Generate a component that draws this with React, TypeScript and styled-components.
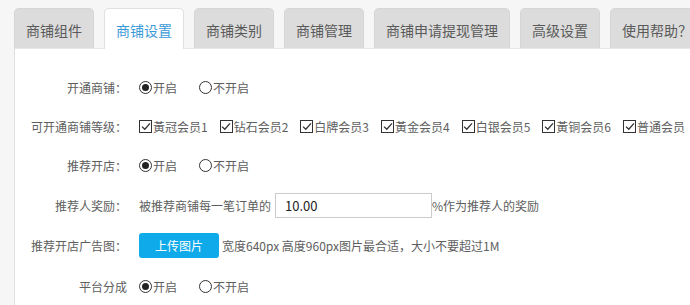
import React from "react";
import styled, { createGlobalStyle } from "styled-components";

const Global = createGlobalStyle`
  html, body { margin: 0; padding: 0; background: #f6f6f6; }
  body { font-family: "Noto Sans CJK SC", "Noto Sans", sans-serif; }
  * { box-sizing: border-box; }
`;

const Page = styled.div`
  padding: 8px 0 0 14px;
  width: 690px;
  height: 305px;
  overflow: hidden;
`;

const TabBar = styled.div`
  display: flex;
  gap: 10px;
  height: 40px;
  position: relative;
  z-index: 1;
`;

const Tab = styled.div<{ $active?: boolean }>`
  flex: none;
  height: ${(p) => (p.$active ? "41px" : "40px")};
  padding: 2px 11px 0;
  display: flex;
  align-items: center;
  justify-content: center;
  font-size: 14px;
  white-space: nowrap;
  border: 1px solid ${(p) => (p.$active ? "#e0e0e0" : "#d8d6d4")};
  border-bottom: none;
  border-radius: 5px 5px 0 0;
  background: ${(p) => (p.$active ? "#ffffff" : "#dcdcdc")};
  color: ${(p) => (p.$active ? "#3d9ad8" : "#5a5a5a")};
`;

const Panel = styled.div`
  background: #fff;
  border-left: 1px solid #dedede;
  border-top: 1px solid #e6e6e6;
  padding-top: 19px;
  height: 260px;
`;

const Row = styled.div<{ $h: number }>`
  display: flex;
  align-items: center;
  height: ${(p) => p.$h}px;
  font-size: 12px;
  color: #5e5e5e;
`;

const Label = styled.div`
  width: 112px;
  text-align: right;
  flex: none;
  white-space: nowrap;
`;

const Controls = styled.div`
  margin-left: 12px;
  display: flex;
  align-items: center;
  white-space: nowrap;
`;

const Option = styled.label<{ $gap: number }>`
  display: flex;
  align-items: center;
  margin-right: ${(p) => p.$gap}px;
`;

const RadioDot = styled.span<{ $on?: boolean }>`
  width: 13px;
  height: 13px;
  border-radius: 50%;
  border: 1.3px solid #333;
  display: inline-flex;
  align-items: center;
  justify-content: center;
  margin-right: 1px;
  &::after {
    content: "";
    width: 7px;
    height: 7px;
    border-radius: 50%;
    background: ${(p) => (p.$on ? "#222" : "transparent")};
  }
`;

const Box = styled.span`
  width: 13px;
  height: 13px;
  border: 1.3px solid #333;
  display: inline-flex;
  align-items: center;
  justify-content: center;
  margin-right: 1px;
`;

const TextInput = styled.input`
  width: 157px;
  height: 25px;
  border: 1px solid #cccccc;
  padding: 0 0 0 9px;
  margin: 0 0 0 4px;
  font-family: "Noto Sans CJK SC", sans-serif;
  font-size: 13px;
  color: #222;
  outline: none;
  background: #fff;
`;

const UploadButton = styled.button`
  width: 80px;
  height: 25px;
  border: none;
  border-radius: 3px;
  background: #0eaaea;
  color: #fff;
  font-family: "Noto Sans CJK SC", sans-serif;
  font-size: 12px;
  margin-right: 3px;
  padding: 0;
`;

const Radio = ({ on, text }: { on?: boolean; text: string }) => (
  <Option $gap={22}>
    <RadioDot $on={on} />
    {text}
  </Option>
);

const Check = ({ text }: { text: string }) => (
  <Option $gap={12}>
    <Box>
      <svg width="10" height="9" viewBox="0 0 10 9">
        <path d="M1 4.6 L3.8 7.3 L9 1.4" fill="none" stroke="#333" strokeWidth="1.3" />
      </svg>
    </Box>
    {text}
  </Option>
);

const tabs = ["商铺组件", "商铺设置", "商铺类别", "商铺管理", "商铺申请提现管理", "高级设置", "使用帮助？"];
const levels = ["黃冠会员1", "钻石会员2", "白牌会员3", "黃金会员4", "白银会员5", "黃铜会员6", "普通会员"];

export default function App() {
  return (
    <>
      <Global />
      <Page>
        <TabBar>
          {tabs.map((t, i) => (
            <Tab key={t} $active={i === 1}>
              {t}
            </Tab>
          ))}
        </TabBar>
        <Panel>
          <Row $h={39}>
            <Label>开通商铺：</Label>
            <Controls>
              <Radio on text="开启" />
              <Radio text="不开启" />
            </Controls>
          </Row>
          <Row $h={39}>
            <Label>可开通商铺等级：</Label>
            <Controls>
              {levels.map((l) => (
                <Check key={l} text={l} />
              ))}
            </Controls>
          </Row>
          <Row $h={39}>
            <Label>推荐开店：</Label>
            <Controls>
              <Radio on text="开启" />
              <Radio text="不开启" />
            </Controls>
          </Row>
          <Row $h={40}>
            <Label>推荐人奖励：</Label>
            <Controls>
              被推荐商铺每一笔订单的
              <TextInput readOnly defaultValue="10.00" />
              %作为推荐人的奖励
            </Controls>
          </Row>
          <Row $h={41}>
            <Label>推荐开店广告图：</Label>
            <Controls>
              <UploadButton>上传图片</UploadButton>
              宽度640px 高度960px图片最合适，大小不要超过1M
            </Controls>
          </Row>
          <Row $h={41}>
            <Label>平台分成</Label>
            <Controls>
              <Radio on text="开启" />
              <Radio text="不开启" />
            </Controls>
          </Row>
        </Panel>
      </Page>
    </>
  );
}
